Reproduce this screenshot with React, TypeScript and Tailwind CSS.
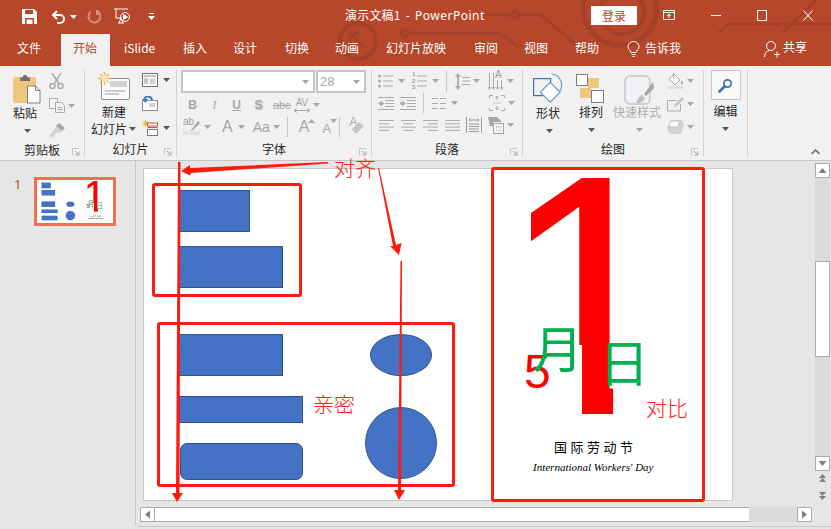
import React from "react";

const CN = { fontFamily: '"Noto Sans CJK SC", "Noto Sans", sans-serif' };
const G = "#ababab";

function Caret({ c = "#a6a6a6", className = "" }: { c?: string; className?: string }) {
  return (
    <svg width="7" height="4" viewBox="0 0 7 4" className={className}>
      <path d="M0 0h7L3.5 4z" fill={c} />
    </svg>
  );
}

function Launcher() {
  return (
    <svg width="8" height="8" viewBox="0 0 8 8">
      <path d="M0.5 7V0.5H7" fill="none" stroke="#c4c4c4" />
      <path d="M3 3l3.5 3.5M7 3.5V7H3.5" fill="none" stroke="#a6a6a6" />
    </svg>
  );
}

function Label({ text, right = true }: { text: string; right?: boolean }) {
  return (
    <div className="relative h-[20px] pt-[4px] flex items-center justify-center text-[12px] leading-none text-[#262626]">
      <span>{text}</span>
      {right && (
        <span className="absolute right-[4px] bottom-[1px] flex">
          <Launcher />
        </span>
      )}
    </div>
  );
}

function Sep({ h = 32 }: { h?: number }) {
  return <div className="w-px bg-[#c6c6c6] shrink-0" style={{ height: h }} />;
}

function Paste() {
  return (
    <svg width="30" height="30" viewBox="0 0 30 30">
      <rect x="1" y="3" width="23" height="26" rx="2" fill="#eec77f" />
      <path d="M8 3.5h2.5a2.5 2.5 0 0 1 5 0H18v3.5H8z" fill="#6f6f6f" />
      <path d="M15.5 12h8l4.5 4.5V29H15.5z" fill="#fff" stroke="#7f7f7f" />
      <path d="M23.5 12v4.5H28" fill="none" stroke="#7f7f7f" />
    </svg>
  );
}

function Scissors() {
  return (
    <svg width="15" height="16" viewBox="0 0 15 16" fill="none" stroke="#ababab" strokeWidth="1.5">
      <path d="M3 0l7 11M12 0L5 11" />
      <circle cx="3.5" cy="13" r="2.5" />
      <circle cx="11.5" cy="13" r="2.5" />
    </svg>
  );
}

function Copy() {
  return (
    <svg width="16" height="15" viewBox="0 0 16 15" fill="#f4f4f4" stroke="#ababab">
      <path d="M0.5 0.5h8v10h-8z" />
      <path d="M6.5 4.5h6l3 3v7h-9z" />
      <path d="M8.5 9.5h5M8.5 11.5h5" />
    </svg>
  );
}

function Brush() {
  return (
    <svg width="17" height="16" viewBox="0 0 17 16">
      <path d="M10 1l6 5-3 3-6-5z" fill="#a6a6a6" />
      <path d="M7 4l6 5-2 2-3-1-5 6-3-2 5-6z" fill="#d4d4d4" />
    </svg>
  );
}

function NewSlide() {
  return (
    <svg width="32" height="28" viewBox="0 0 32 28">
      <rect x="3.5" y="6.5" width="28" height="21" rx="1.5" fill="#fafafa" stroke="#8c8c8c" />
      <rect x="12" y="9" width="17" height="6" fill="#d2d2d2" />
      <path d="M7 19h20M7 22h14" stroke="#9c9c9c" />
      <g stroke="#f0b94a" strokeWidth="1.4">
        <path d="M6.5 0v13M0 6.5h13M2 2l9 9M11 2l-9 9" />
      </g>
      <circle cx="6.5" cy="6.5" r="3" fill="#fbe6b5" />
    </svg>
  );
}

function Layout() {
  return (
    <svg width="16" height="14" viewBox="0 0 16 14">
      <rect x="0.5" y="0.5" width="15" height="13" fill="#fff" stroke="#6f6f6f" />
      <path d="M2 3h12M2 6h4M2 8h4M2 10h4" stroke="#8c8c8c" />
      <rect x="7.5" y="5.5" width="6" height="6" fill="#d2d2d2" />
    </svg>
  );
}

function Reset() {
  return (
    <svg width="16" height="15" viewBox="0 0 16 15">
      <rect x="0.5" y="4.5" width="15" height="10" fill="#fff" stroke="#8c8c8c" />
      <path d="M7 8h6M7 10h6" stroke="#a6a6a6" />
      <path d="M2 5a4 4 0 0 1 8-1" fill="none" stroke="#3e7ab8" strokeWidth="2" />
      <path d="M0 3l3.5 4L6 3z" fill="#3e7ab8" />
    </svg>
  );
}

function Section() {
  return (
    <svg width="16" height="16" viewBox="0 0 16 16">
      <g stroke="#f0b94a">
        <path d="M3.5 0v7M0 3.5h7M1 1l5 5M6 1L1 6" />
      </g>
      <rect x="5.5" y="3" width="10" height="3" fill="#fff" stroke="#c9562f" />
      <rect x="5.5" y="9.5" width="10" height="6" fill="#fff" stroke="#7f7f7f" />
      <path d="M5.5 7.5h10" stroke="#c9562f" />
    </svg>
  );
}

function Bullets() {
  return (
    <svg width="15" height="14" viewBox="0 0 15 14" fill={G}>
      <circle cx="1.5" cy="2" r="1.5" />
      <circle cx="1.5" cy="7" r="1.5" />
      <circle cx="1.5" cy="12" r="1.5" />
      <path d="M5 1.5h10v1H5zM5 6.5h10v1H5zM5 11.5h10v1H5z" />
    </svg>
  );
}

function Numbered() {
  return (
    <div className="relative w-[15px] h-[16px]">
      <svg width="15" height="16" viewBox="0 0 15 16" fill={G} className="absolute inset-0">
        <path d="M5 2.5h10v1H5zM5 7.5h10v1H5zM5 12.5h10v1H5z" />
      </svg>
      <div className="absolute left-0 top-[-2px] text-[6px] leading-[6.5px] text-[#9c9c9c] font-bold" style={{ fontFamily: "Liberation Sans" }}>
        1<br />2<br />3
      </div>
    </div>
  );
}

function LineSpacing() {
  return (
    <svg width="15" height="17" viewBox="0 0 15 17" fill={G}>
      <path d="M3 0l3 4H4v9h2l-3 4-3-4h2V4H0z" />
      <path d="M7 4h8v1H7zM7 7.5h8v1H7zM7 11h8v1H7z" />
    </svg>
  );
}

function TextDir() {
  return (
    <div className="relative w-[16px] h-[17px]">
      <svg width="16" height="17" viewBox="0 0 16 17" fill="none" stroke={G} className="absolute inset-0">
        <path d="M1.5 0v15M5.5 0v15M9.5 7v8M13.5 7v8" />
        <path d="M0 14l1.5 2.5L3 14M4 14l1.5 2.5L7 14M8 14l1.5 2.5L11 14M12 14l1.5 2.5L15 14" />
      </svg>
      <span className="absolute left-[7px] top-[-3px] text-[10px] leading-[10px] text-[#9c9c9c]" style={{ fontFamily: "Liberation Sans" }}>A</span>
    </div>
  );
}

function Indent({ flip }: { flip?: boolean }) {
  return (
    <svg width="16" height="13" viewBox="0 0 16 13" fill={G}>
      <path d="M0 0h16v1H0zM7 3h9v1H7zM7 6h9v1H7zM7 9h9v1H7zM0 12h16v1H0z" />
      {flip ? <path d="M0 5.5h2V3.5l4 3-4 3v-2H0z" /> : <path d="M6 5.5H4V3.5l-4 3 4 3v-2h2z" />}
    </svg>
  );
}

function Columns() {
  return (
    <svg width="14" height="11" viewBox="0 0 14 11" fill={G}>
      <path d="M0 0h6v1H0zM8 0h6v1H8zM0 5h6v1H0zM8 5h6v1H8zM0 10h6v1H0zM8 10h6v1H8z" />
    </svg>
  );
}

function AlignText() {
  return (
    <svg width="16" height="16" viewBox="0 0 16 16" fill="none" stroke={G}>
      <path d="M0.5 3V0.5H4M12 .5h3.5V3M.5 13v2.5H4M12 15.5h3.5V13" />
      <path d="M4 8h8" stroke="#d8b8d8" />
      <path d="M8 1v4M6.5 3l1.5-2 1.5 2M8 11v4M6.5 13l1.5 2 1.5-2" />
    </svg>
  );
}

function Al({ mode }: { mode: "l" | "c" | "r" | "j" }) {
  const xs: Record<string, [number, number][]> = {
    l: [[0, 15], [0, 10], [0, 15], [0, 10]],
    c: [[0, 15], [2.5, 10], [0, 15], [2.5, 10]],
    r: [[0, 15], [5, 10], [0, 15], [5, 10]],
    j: [[0, 15], [0, 15], [0, 15], [0, 15]],
  };
  return (
    <svg width="15" height="11" viewBox="0 0 15 11" fill={G}>
      {xs[mode].map(([x, w], i) => (
        <rect key={i} x={x} y={i * 3.3} width={w} height="1" />
      ))}
    </svg>
  );
}

function Distrib() {
  return (
    <svg width="16" height="16" viewBox="0 0 16 16" fill="none" stroke="#9c9c9c">
      <path d="M.5 0v16M15.5 0v16M3 3h10M4.5 1.5L3 3l1.5 1.5M11.5 1.5L13 3l-1.5 1.5" />
      <path d="M3 7h10M3 9.5h10M3 12h10M3 14.5h10" />
    </svg>
  );
}

function SmartArt() {
  return (
    <svg width="16" height="17" viewBox="0 0 16 17">
      <path d="M0 0h9l5 5H5v4H2z" fill="#a6a6a6" />
      <rect x="5.5" y="6.5" width="10" height="10" fill="#f4f4f4" stroke="#a6a6a6" />
      <path d="M8 10h5M8 13h5" stroke="#a6a6a6" strokeDasharray="1 1" />
    </svg>
  );
}

function Shapes() {
  return (
    <svg width="31" height="31" viewBox="0 0 31 31" fill="none" strokeWidth="1.2">
      <path d="M18.5 1a11 11 0 0 1 6 19.5" stroke="#6d9bd1" />
      <rect x="0.6" y="5.6" width="17" height="17" stroke="#3e74b4" />
      <rect x="10.5" y="11.5" width="14" height="14" transform="rotate(45 16.5 18.5)" fill="#fff" stroke="#6d9bd1" />
    </svg>
  );
}

function Arrange() {
  return (
    <svg width="28" height="29" viewBox="0 0 28 29">
      <rect x="12" y="4" width="11" height="10" fill="#eec77f" />
      <rect x="4" y="14" width="11" height="10" fill="#eec77f" />
      <rect x="0.5" y="0.5" width="11" height="11" fill="#fff" stroke="#7f7f7f" />
      <rect x="15.5" y="16.5" width="12" height="12" fill="#fff" stroke="#7f7f7f" />
    </svg>
  );
}

function QuickStyle() {
  return (
    <svg width="30" height="30" viewBox="0 0 30 30">
      <rect x="1" y="1" width="25" height="28" rx="5" fill="#f2eff5" stroke="#c4c4c4" strokeWidth="1.4" />
      <path d="M29 7l-9 12 2 2 8-8z" fill="#a6a6a6" />
      <path d="M18 20l3 3c-1 3-4 5-9 5 2-2 2-7 6-8z" fill="#bdbdbd" />
    </svg>
  );
}

function Fill() {
  return (
    <svg width="17" height="16" viewBox="0 0 17 16">
      <rect x="0" y="13" width="16" height="3" fill="#e2e2e2" />
      <path d="M7 1l6 6-5 5-6-6z" fill="#f9f9f9" stroke="#ababab" />
      <path d="M14 7c1.2 1.5 2 2.5 2 3.4a1 1 0 0 1-2 0z" fill="#ababab" />
      <path d="M6 0l1 6" stroke="#ababab" />
    </svg>
  );
}

function Outline() {
  return (
    <svg width="17" height="16" viewBox="0 0 17 16" fill="none" stroke="#ababab">
      <path d="M.5 15V4.5h9M13.5 8v7H.5" />
      <path d="M15 1l2 2-7 7-3 1 1-3z" fill="#c4c4c4" stroke="none" />
    </svg>
  );
}

function Effects() {
  return (
    <svg width="17" height="14" viewBox="0 0 17 14">
      <path d="M5 0h10l2 5-3 9H3L0 9z" fill="#d2d2d2" />
      <path d="M4 1h9l-2 6H1z" fill="#fbfbfb" stroke="#bdbdbd" />
    </svg>
  );
}

function Eraser() {
  return (
    <div className="relative w-[16px] h-[16px]">
      <span className="absolute left-[1px] top-[-3px] text-[12px] leading-[12px] text-[#ababab]" style={{ fontFamily: "Liberation Sans" }}>A</span>
      <svg width="16" height="16" viewBox="0 0 16 16" className="absolute inset-0">
        <path d="M4 10l7-7 5 4-7 7H7z" fill="#c4c4c4" />
      </svg>
    </div>
  );
}

function Highlight() {
  return (
    <div className="relative w-[17px] h-[17px]">
      <span className="absolute left-0 top-[-2px] text-[10px] leading-[11px] text-[#9c9c9c]" style={{ fontFamily: "Liberation Sans" }}>ab</span>
      <svg width="17" height="17" viewBox="0 0 17 17" className="absolute inset-0">
        <path d="M9 11l6-8 2 2-7 7-3 1z" fill="#a6a6a6" />
        <rect x="0" y="13" width="17" height="4" fill="#e2e2e2" />
      </svg>
    </div>
  );
}

function GlyphBtn({ children, className = "", style }: { children: React.ReactNode; className?: string; style?: React.CSSProperties }) {
  return (
    <span className={`leading-none text-[#a6a6a6] ${className}`} style={{ fontFamily: "Liberation Sans", ...style }}>
      {children}
    </span>
  );
}

function Ribbon() {
  return (
    <div className="flex h-[95px] bg-[#f1f1f1] border-b border-[#c6c6c6] pt-[4px] pb-[3px] text-[#262626]" style={CN}>
      {/* clipboard */}
      <div className="w-[85px] border-r border-[#d2d2d2] flex flex-col shrink-0">
        <div className="flex-1 flex">
          <div className="w-[49px] pl-[12px] pt-[4px] flex flex-col">
            <Paste />
            <div className="text-[12px] leading-none mt-[3px] ml-px">粘贴</div>
            <Caret c="#595959" className="ml-[12px] mt-[10px]" />
          </div>
          <div className="flex flex-col items-start pt-[3px] gap-[9px]">
            <Scissors />
            <div className="flex items-center gap-[3px]"><Copy /><Caret /></div>
            <Brush />
          </div>
        </div>
        <Label text="剪贴板" />
      </div>
      {/* slides */}
      <div className="w-[92px] border-r border-[#d2d2d2] flex flex-col shrink-0">
        <div className="flex-1 flex">
          <div className="w-[57px] flex flex-col items-start pl-[6px] pt-[2px]">
            <span className="ml-[7px]"><NewSlide /></span>
            <div className="ml-[11px] text-[12px] leading-none mt-[6px]">新建</div>
            <div className="flex items-center gap-[2px] mt-[5px] text-[12px] leading-none">幻灯片<Caret c="#595959" /></div>
          </div>
          <div className="flex flex-col items-start pt-[3px] gap-[9px]">
            <div className="flex items-center gap-[5px]"><Layout /><Caret c="#595959" /></div>
            <Reset />
            <div className="flex items-center gap-[5px]"><Section /><Caret c="#595959" /></div>
          </div>
        </div>
        <Label text="幻灯片" />
      </div>
      {/* font */}
      <div className="w-[195px] border-r border-[#d2d2d2] flex flex-col shrink-0">
        <div className="flex-1 pl-[4px] flex flex-col">
          <div className="flex gap-px">
            <div className="w-[134px] h-[23px] bg-white border-2 border-[#c6c6c6] flex items-center justify-end pr-[4px]"><Caret /></div>
            <div className="w-[50px] h-[23px] bg-white border-2 border-[#c6c6c6] flex items-center justify-between pl-[2px] pr-[4px]">
              <span className="text-[13px] leading-none text-[#a6a6a6]" style={{ fontFamily: "Liberation Sans" }}>28</span>
              <Caret />
            </div>
          </div>
          <div className="flex items-center h-[16px] mt-[4px] pl-[6px] text-[12px] gap-[11px]">
            <GlyphBtn className="font-bold w-[11px] text-center">B</GlyphBtn>
            <GlyphBtn className="italic w-[11px] text-center" style={{ fontFamily: "Liberation Serif" }}>I</GlyphBtn>
            <GlyphBtn className="underline font-bold w-[11px] text-center">U</GlyphBtn>
            <GlyphBtn className="font-bold w-[11px] text-center [text-shadow:1px_1px_2px_#b5b5b5]">S</GlyphBtn>
            <GlyphBtn className="line-through text-[11px] w-[14px] text-center -ml-[2px] mr-[-4px]">abc</GlyphBtn>
            <span className="flex items-center gap-[3px]">
              <span className="flex flex-col items-center">
                <GlyphBtn className="text-[10px] leading-[9px]">AV</GlyphBtn>
                <svg width="16" height="5" viewBox="0 0 16 5" fill="none" stroke="#ababab"><path d="M0 2.5h16M3 .5l-3 2 3 2M13 .5l3 2-3 2" /></svg>
              </span>
              <Caret />
            </span>
          </div>
          <div className="flex items-center h-[17px] mt-[5px] pl-[2px]">
            <Highlight />
            <Caret className="ml-[4px]" />
            <GlyphBtn className="text-[16px] ml-[11px]">A</GlyphBtn>
            <Caret className="ml-[5px]" />
            <GlyphBtn className="text-[14px] ml-[8px]">Aa</GlyphBtn>
            <Caret className="ml-[3px]" />
            <span className="ml-[7px]"><Sep h={20} /></span>
            <span className="flex items-start ml-[11px]">
              <GlyphBtn className="text-[16px]">A</GlyphBtn><Caret className="-ml-px rotate-180" />
            </span>
            <span className="flex items-start ml-[7px]">
              <GlyphBtn className="text-[13px] mt-[3px]">A</GlyphBtn><Caret className="-ml-px" />
            </span>
            <span className="ml-[2px]"><Sep h={20} /></span>
            <span className="ml-[8px]"><Eraser /></span>
          </div>
        </div>
        <Label text="字体" />
      </div>
      {/* paragraph */}
      <div className="w-[151px] border-r border-[#d2d2d2] flex flex-col shrink-0">
        <div className="flex-1 pl-[6px] flex flex-col">
          <div className="flex items-center h-[20px] mt-[1px]">
            <Bullets /><Caret className="ml-[5px]" />
            <span className="ml-[7px]"><Numbered /></span><Caret className="ml-[5px]" />
            <span className="ml-[7px]"><Sep h={21} /></span>
            <span className="ml-[8px]"><LineSpacing /></span><Caret className="ml-[3px]" />
            <span className="ml-[8px]"><TextDir /></span><Caret className="ml-[3px]" />
          </div>
          <div className="flex items-center h-[20px] mt-[2px]">
            <Indent /><span className="ml-[6px]"><Indent flip /></span>
            <span className="ml-[7px]"><Sep h={20} /></span>
            <span className="ml-[8px]"><Columns /></span><Caret className="ml-[5px]" />
            <span className="ml-[31px]"><AlignText /></span><Caret className="ml-[3px]" />
          </div>
          <div className="flex items-center h-[18px] mt-[3px] pl-[1px]">
            <Al mode="l" /><span className="ml-[7px]"><Al mode="c" /></span>
            <span className="ml-[7px]"><Al mode="r" /></span><span className="ml-[7px]"><Al mode="j" /></span>
            <span className="ml-[6px]"><Distrib /></span><span className="ml-[6px]"><SmartArt /></span>
            <Caret className="ml-[3px]" />
          </div>
        </div>
        <Label text="段落" />
      </div>
      {/* drawing */}
      <div className="w-[181px] border-r border-[#d2d2d2] flex flex-col shrink-0">
        <div className="flex-1 flex pl-[10px] pt-[3px]">
          <div className="w-[43px] flex flex-col">
            <Shapes />
            <div className="text-[12px] leading-none mt-[3px] ml-[3px]">形状</div>
            <Caret c="#595959" className="ml-[13px] mt-[10px]" />
          </div>
          <div className="w-[37px] flex flex-col pt-[1px]">
            <Arrange />
            <div className="text-[12px] leading-none mt-[3px] ml-[3px]">排列</div>
            <Caret c="#595959" className="ml-[12px] mt-[10px]" />
          </div>
          <div className="w-[54px] flex flex-col pt-[2px]">
            <span className="ml-[11px] h-[28px]"><QuickStyle /></span>
            <div className="text-[12px] leading-none mt-[3px] text-[#ababab]">快速样式</div>
            <Caret className="ml-[23px] mt-[10px]" />
          </div>
          <div className="flex flex-col items-start gap-[7px]">
            <div className="flex items-center gap-[3px]"><Fill /><Caret /></div>
            <div className="flex items-center gap-[3px]"><Outline /><Caret /></div>
            <div className="flex items-center gap-[3px] mt-[1px]"><Effects /><Caret /></div>
          </div>
        </div>
        <Label text="绘图" />
      </div>
      {/* edit */}
      <div className="w-[44px] border-r border-[#d2d2d2] flex flex-col items-center shrink-0">
        <div className="w-[30px] h-[30px] bg-[#f9f9f9] border border-[#c6c6c6] flex items-center justify-center">
          <svg width="15" height="15" viewBox="0 0 15 15" fill="none">
            <circle cx="9.5" cy="5.5" r="3.7" stroke="#3e74b4" strokeWidth="1.8" />
            <path d="M6.5 8.5L1.5 13.5" stroke="#3e74b4" strokeWidth="2.6" strokeLinecap="round" />
          </svg>
        </div>
        <div className="text-[12px] leading-none mt-[5px]">编辑</div>
        <Caret c="#595959" className="mt-[10px]" />
      </div>
      <div className="flex-1 flex items-end justify-end pr-[11px] pb-[2px]">
        <svg width="9" height="6" viewBox="0 0 9 6" fill="none" stroke="#6f6f6f" strokeWidth="1.6"><path d="M.5 5l4-4 4 4" /></svg>
      </div>
    </div>
  );
}

function SlideContent() {
  const rect = "absolute bg-[#4472c4] border border-[#2f528f]";
  return (
    <div className="absolute left-0 top-0 w-[588px] h-[331px] bg-white">
      <div className={rect} style={{ left: 35, top: 21, width: 71, height: 42 }} />
      <div className={rect} style={{ left: 35, top: 77, width: 104, height: 42 }} />
      <div className={rect} style={{ left: 35, top: 165, width: 104, height: 42 }} />
      <div className={rect} style={{ left: 35, top: 227, width: 124, height: 27 }} />
      <div className={`${rect} rounded-[7px]`} style={{ left: 36, top: 274, width: 123, height: 37 }} />
      <div className={`${rect} rounded-[50%]`} style={{ left: 226, top: 165, width: 62, height: 42 }} />
      <div className={`${rect} rounded-[50%]`} style={{ left: 221, top: 238, width: 72, height: 72 }} />
      <div className="absolute left-[349px] top-[26px] text-[343px] leading-[200px] text-[#ff0000] [clip-path:polygon(38px_-40px,120px_-40px,120px_219px,89px_219px,89px_150px,38px_150px)]" style={{ fontFamily: '"Liberation Sans", sans-serif' }}>1</div>
      <div className="absolute left-[380px] top-[173px] text-[48px] leading-[60px] text-[#ff0000]" style={{ fontFamily: '"Liberation Sans", sans-serif' }}>5</div>
      <div className="absolute left-[389px] top-[142px] text-[50px] leading-[70px] text-[#00b050]" style={CN}>月</div>
      <div className="absolute left-[455px] top-[156px] text-[50px] leading-[70px] text-[#00b050]" style={CN}>日</div>
      <div className="absolute left-[410px] top-[269px] text-[13px] leading-[18px] tracking-[3.5px] text-black whitespace-nowrap" style={CN}>国际劳动节</div>
      <div className="absolute left-[389px] top-[290px] text-[11px] leading-[16px] italic text-black whitespace-nowrap" style={{ fontFamily: '"Liberation Serif", serif' }}>International Workers' Day</div>
    </div>
  );
}

function Annotations() {
  const box = "absolute border-[3px] border-[#ff1a0e] rounded-[3px]";
  const label = "absolute text-[21px] leading-none text-[#ff2010] font-light whitespace-nowrap";
  return (
    <div className="absolute inset-0 pointer-events-none" style={CN}>
      <div className={box} style={{ left: 152, top: 183, width: 150, height: 114 }} />
      <div className={box} style={{ left: 157, top: 322, width: 298, height: 165 }} />
      <div className={box} style={{ left: 491, top: 167, width: 214, height: 335 }} />
      <svg className="absolute inset-0" width="831" height="529" viewBox="0 0 831 529" fill="#ff1a0e">
        <path d="M328 162L190 168V165L181 171 190 175.500 191 173 328 163.500z" />
        <path d="M379 168L396 245 401.500 243 399 255 390 246 393 246 378 168z" />
        <path d="M178 162H180.500L179.500 493H183L177 502 172 493H176z" />
        <path d="M400.500 261H402L401 490H405L399 500 394 490H398z" />
      </svg>
      <div className={label} style={{ left: 334, top: 157 }}>对齐</div>
      <div className={label} style={{ left: 313, top: 393 }}>亲密</div>
      <div className={label} style={{ left: 646, top: 397 }}>对比</div>
    </div>
  );
}

function ScrollBtn({ d }: { d: string }) {
  return (
    <div className="w-[15px] h-[15px] bg-white border border-[#ababab] flex items-center justify-center shrink-0">
      <svg width="9" height="9" viewBox="0 0 9 9"><path d={d} fill="#7f7f7f" /></svg>
    </div>
  );
}

function TitleDecor() {
  return (
    <svg className="absolute inset-0" width="831" height="66" viewBox="0 0 831 66" fill="none" stroke="#a5402a" strokeWidth="3">
      <circle cx="358" cy="41" r="18" strokeWidth="4" />
      <path d="M350 33l14 14M350 33h9M350 33v9" />
      <circle cx="405" cy="33" r="3.500" />
      <path d="M409 33h90l20 14" />
      <circle cx="515" cy="15" r="3.500" />
      <path d="M484 15h27M519 15h22l42 36" />
      <circle cx="620" cy="8" r="37" strokeWidth="5" />
      <circle cx="622" cy="12" r="22" strokeWidth="4" />
      <path d="M718 33l10-9h103M782 33l34-33" />
    </svg>
  );
}

export default function App() {
  const tabs: [string, number][] = [
    ["文件", 17], ["开始", 73], ["iSlide", 124], ["插入", 183], ["设计", 233], ["切换", 285], ["动画", 335], ["幻灯片放映", 386], ["审阅", 474], ["视图", 524], ["帮助", 575],
  ];
  return (
    <div className="relative w-[831px] h-[529px] overflow-hidden bg-[#e6e6e6]" style={CN}>
      {/* title + tabs */}
      <div className="relative h-[66px] bg-[#b7472a] text-white overflow-hidden">
        <TitleDecor />
        <div className="relative h-[33px] flex items-center">
          <div className="flex items-center pl-[22px]">
            <svg width="15" height="15" viewBox="0 0 15 15">
              <path d="M0 0h12l3 3v12H0z" fill="#fff" />
              <rect x="3" y="1" width="8" height="4" fill="#b7472a" />
              <rect x="3" y="9" width="9" height="6" fill="#b7472a" />
              <rect x="4.500" y="10.500" width="6" height="4.500" fill="#fff" />
            </svg>
            <svg width="15" height="14" viewBox="0 0 15 14" fill="none" stroke="#fff" strokeWidth="2" className="ml-[14px]">
              <path d="M2 5h7a4 4 0 0 1 0 8H6" />
              <path d="M6 1L2 5l4 4" />
            </svg>
            <Caret c="#fff" className="ml-[4px]" />
            <svg width="15" height="15" viewBox="0 0 15 15" fill="none" stroke="#d68e78" strokeWidth="2" className="ml-[9px]">
              <path d="M5 2.500A6 6 0 1 0 11 2" />
              <path d="M11 1v4h3" />
            </svg>
            <svg width="17" height="17" viewBox="0 0 17 17" fill="none" stroke="#fff" className="ml-[13px]">
              <path d="M0 1h14M2 1v9h6M7 10l-2 5M7 10l2 5M4 15h6" />
              <circle cx="11" cy="9" r="4.500" />
              <path d="M9.500 6.500v5l4-2.500z" fill="#fff" />
            </svg>
            <svg width="7" height="8" viewBox="0 0 7 8" className="ml-[17px]"><path d="M1 0h5v1H1zM0 3h7L3.500 7z" fill="#fff" /></svg>
          </div>
          <div className="absolute left-[345px] top-[8px] text-[12px] leading-[14px] whitespace-nowrap tracking-[0.2px]">
            演示文稿1<span className="ml-[5px] mr-[5px]">-</span><span className="tracking-[0.5px]" style={{ fontFamily: '"Noto Sans", sans-serif' }}>PowerPoint</span>
          </div>
          <div className="absolute left-[591px] top-[6px] w-[46px] h-[19px] bg-white text-[#b7472a] text-[12px] flex items-center justify-center leading-none">登录</div>
          <div className="absolute left-[663px] top-[9px] flex gap-[36px] items-center h-[13px]">
            <svg width="12" height="11" viewBox="0 0 12 11" fill="none" stroke="#fff"><path d="M.5 .5h11v9H.5zM.5 2.500h11M6 8V4.500M4 6l2-2 2 2" /></svg>
            <svg width="10" height="11" viewBox="0 0 10 11" stroke="#fff"><path d="M0 5.500h10" /></svg>
            <svg width="10" height="11" viewBox="0 0 10 11" fill="none" stroke="#fff"><path d="M.5 .5h9v10H.5z" /></svg>
            <svg width="10" height="11" viewBox="0 0 10 11" fill="none" stroke="#fff"><path d="M.5 .5l9 10M9.500 .5l-9 10" /></svg>
          </div>
        </div>
        <div className="relative h-[33px]">
          <div className="absolute left-[61px] top-px w-[49px] h-[32px] bg-[#f1f1f1]" />
          {tabs.map(([t, x]) => (
            <span key={t} className={`absolute top-[8px] text-[12px] leading-[14px] whitespace-nowrap ${t === "开始" ? "text-[#b7472a]" : "text-white"}`} style={{ left: x }}>{t}</span>
          ))}
          <svg width="13" height="17" viewBox="0 0 13 17" fill="none" stroke="#fff" className="absolute left-[627px] top-[8px]">
            <path d="M4 11.500C3 9 1 8 1 5.500a5.500 5 0 0 1 11 0C12 8 10 9 9 11.500zM4.500 13.500h4M5.500 15.500h2" />
          </svg>
          <span className="absolute left-[645px] top-[8px] text-[12px] leading-[14px] whitespace-nowrap">告诉我</span>
          <svg width="16" height="17" viewBox="0 0 16 17" fill="none" stroke="#fff" className="absolute left-[764px] top-[8px]">
            <circle cx="7" cy="5" r="4.500" />
            <path d="M.5 16c0-4 2-6 5-6.500M10 13.500h6M13 10.500v6" />
          </svg>
          <span className="absolute left-[783px] top-[7px] text-[12px] leading-[14px] whitespace-nowrap">共享</span>
        </div>
      </div>
      <Ribbon />
      {/* workspace */}
      <div className="flex h-[368px]">
        <div className="w-[136px] h-[365px] border-r border-[#c6c6c6] shrink-0 flex items-start pt-[16px] pl-[14px] gap-[13px]">
          <span className="text-[13px] leading-[14px] text-[#b7472a] w-[7px]" style={{ fontFamily: '"Noto Sans", sans-serif' }}>1</span>
          <div className="w-[82px] h-[49px] border-[3px] border-[#ee7153] bg-white relative overflow-hidden">
            <div className="absolute left-0 top-0 origin-top-left scale-[0.13] w-[588px] h-[331px]">
              <SlideContent />
            </div>
          </div>
        </div>
        <div className="flex-1 flex flex-col">
          <div className="flex h-[346px]">
            <div className="flex-1 pl-[7px] pt-[7px]">
              <div className="w-[590px] h-[333px] border border-[#c6c6c6] relative">
                <SlideContent />
              </div>
            </div>
            <div className="w-[15px] mr-px mt-[2px] flex flex-col shrink-0">
              <ScrollBtn d="M4.500 2l4 5H.5z" />
              <div className="w-[15px] flex-none h-[278px] bg-[#dbdbdb] flex flex-col">
                <div className="h-[83px]" />
                <div className="h-[96px] bg-white border border-[#ababab]" />
              </div>
              <ScrollBtn d="M.5 2h8l-4 5z" />
              <div className="flex flex-col items-center gap-[9px] mt-[3px]">
                <svg width="9" height="9" viewBox="0 0 9 9" fill="#7f7f7f"><path d="M4.500 0l3.500 4H1zM4.500 4l3.500 4H1z" /></svg>
                <svg width="9" height="9" viewBox="0 0 9 9" fill="#7f7f7f"><path d="M1 0h7L4.500 4zM1 4h7L4.500 8z" /></svg>
              </div>
            </div>
          </div>
          <div className="flex h-[15px] ml-[4px] w-[672px]">
            <ScrollBtn d="M2 4.500l5-4v8z" />
            <div className="w-[594px] bg-white border-y border-[#ababab]" />
            <div className="flex-1 bg-[#dbdbdb]" />
            <ScrollBtn d="M7 4.500l-5-4v8z" />
          </div>
          <div className="h-px bg-[#c6c6c6] mt-[4px] ml-[2px]" />
        </div>
      </div>
      <Annotations />
    </div>
  );
}
